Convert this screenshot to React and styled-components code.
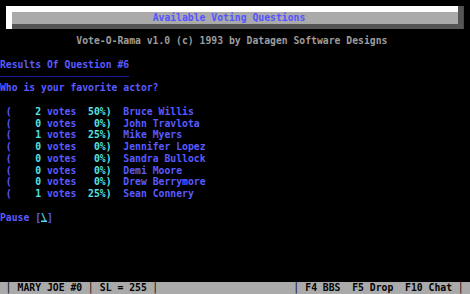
import React from "react";
import styled, { createGlobalStyle } from "styled-components";

// DOS text mode: 80 x 25 cells squeezed into 470 x 294
const CELL_H = "11.76px";

const GlobalStyle = createGlobalStyle`
    html, body {
        margin: 0;
        padding: 0;
        background: #000;
    }
`;

const votes = [
    { count: 2, pct: 50, name: "Bruce Willis" },
    { count: 0, pct: 0, name: "John Travlota" },
    { count: 1, pct: 25, name: "Mike Myers" },
    { count: 0, pct: 0, name: "Jennifer Lopez" },
    { count: 0, pct: 0, name: "Sandra Bullock" },
    { count: 0, pct: 0, name: "Demi Moore" },
    { count: 0, pct: 0, name: "Drew Berrymore" },
    { count: 1, pct: 25, name: "Sean Connery" },
];

const pad = (v, n) => String(v).padStart(n, " ");

const App = () => {
    return (
        <>
            <GlobalStyle />
            <Screen>
                <Header>
                    <TitleFrame>
                        <TitleBar>{" ".repeat(24)}Available Voting Questions</TitleBar>
                    </TitleFrame>
                </Header>
                <Line color="#9c9c9c">{" ".repeat(13)}Vote-O-Rama v1.0 (c) 1993 by Datagen Software Designs</Line>
                <Line />
                <Line>Results Of Question #6</Line>
                <Line color="#1e1eb0">{"─".repeat(22)}</Line>
                <Line>Who is your favorite actor?</Line>
                <Line />
                {votes.map((v) => (
                    <Line key={v.name}>
                        {" ("}
                        <Seg color="#55e4e4">{pad(v.count, 5)}</Seg>
                        {" votes"}
                        <Seg color="#55e4e4">{pad(v.pct, 4) + "%)"}</Seg>
                        {"  " + v.name}
                    </Line>
                ))}
                <Line />
                <Line>
                    {"Pause ["}
                    <Cursor>\</Cursor>
                    {"]"}
                </Line>
                <Spacer />
                <StatusBar>
                    {" │ MARY JOE #0 │ SL = 255 │"}
                    {" ".repeat(23)}
                    {"│ F4 BBS  F5 Drop  F10 Chat │ "}
                </StatusBar>
            </Screen>
        </>
    );
};

//style
const Screen = styled.div`
    width: 470px;
    height: 294px;
    background: #000;
    display: flex;
    flex-direction: column;
    overflow: hidden;
    font-family: "DejaVu Sans Mono", "Liberation Mono", monospace;
    font-size: 9.758px;
    font-weight: bold;
    line-height: ${CELL_H};
    white-space: pre;
`;
const Header = styled.div`
    height: 35.28px;
    padding: 5.88px 0 0 5.875px;
    box-sizing: border-box;
`;
const TitleFrame = styled.div`
    width: 452.375px;
    background: #fff;
    padding: 5.88px 0 0 5.875px;
    box-sizing: border-box;
    box-shadow: 5.875px 0 0 #555;
`;
const TitleBar = styled.div`
    height: ${CELL_H};
    background: #aaa;
    color: #5555ff;
    border-bottom: 5.88px solid #555;
`;
const Line = styled.div`
    height: ${CELL_H};
    color: ${(p) => p.color || "#5a5aff"};
`;
const Seg = styled.span`
    color: ${(p) => p.color};
`;
const Cursor = styled.span`
    display: inline-block;
    height: 10.6px;
    color: #66e0f0;
    box-shadow: inset 0 -1.5px 0 #55d8e8;
    vertical-align: top;
`;
const Spacer = styled.div`
    flex: 1;
`;
const StatusBar = styled.div`
    height: ${CELL_H};
    background: #aaa;
    color: #000;
`;

export default App;
